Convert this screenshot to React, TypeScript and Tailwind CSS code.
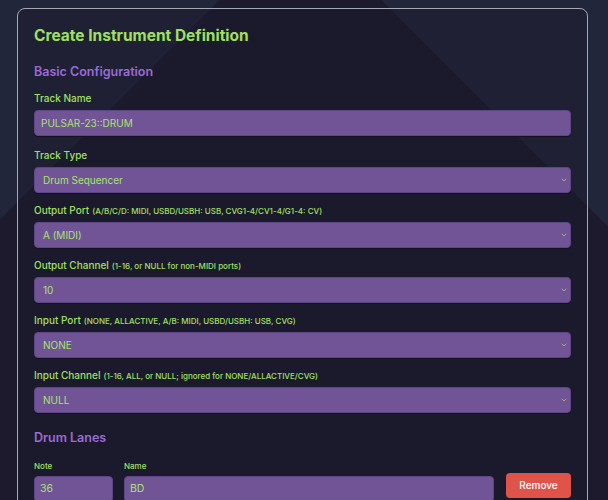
import { ChevronDown } from 'lucide-react';

const fields = [
  { label: 'Output Port', hint: '(A/B/C/D: MIDI, USBD/USBH: USB, CVG1-4/CV1-4/G1-4: CV)', value: 'A (MIDI)' },
  { label: 'Output Channel', hint: '(1-16, or NULL for non-MIDI ports)', value: '10' },
  { label: 'Input Port', hint: '(NONE, ALLACTIVE, A/B: MIDI, USBD/USBH: USB, CVG)', value: 'NONE' },
  { label: 'Input Channel', hint: '(1-16, ALL, or NULL; ignored for NONE/ALLACTIVE/CVG)', value: 'NULL' },
];

function Label({ text, hint }: { text: string; hint?: string }) {
  return (
    <div className="h-[12px] mb-[6px] text-[10px] leading-[12px] font-medium text-[#a0e060]">
      {text}
      {hint && <span className="ml-[3px] text-[8px]">{hint}</span>}
    </div>
  );
}

function Select({ value }: { value: string }) {
  return (
    <div className="relative">
      <div className="h-[26px] flex items-center pl-[8px] rounded-[4px] bg-[#715496] border border-[#5e4585] shadow-[0_1px_0_#14121f] text-[10px] text-[#a6e46c]">
        {value}
      </div>
      <ChevronDown className="absolute right-[3px] top-[9px] w-[8px] h-[8px] text-[#9cb56c]" strokeWidth={3} />
    </div>
  );
}

export default function App() {
  return (
    <div
      className="h-screen overflow-hidden pt-[8px] pl-[17px] bg-[#1c1a2c] bg-[linear-gradient(45deg,transparent_623px,#22263a_623px),linear-gradient(315deg,transparent_628px,#22263a_628px)]"
      style={{ fontFamily: 'Inter, "Noto Sans", sans-serif' }}
    >
      <div className="w-[571px] rounded-[8px] border-[1.5px] border-[#a4a8b6] bg-[#1c1a2e]/40 px-[16px] pt-[17px] pb-[20px]">
        <h1 className="text-[15.5px] leading-[20px] font-bold text-[#a0e060]">Create Instrument Definition</h1>

        {/* Basic config */}
        <h2 className="mt-[18px] text-[12.5px] leading-[16px] font-semibold text-[#9b6bd8]">Basic Configuration</h2>

        <div className="mt-[12px]">
          <Label text="Track Name" />
          <div className="h-[26px] flex items-center pl-[6px] rounded-[4px] bg-[#715496] border border-[#5e4585] shadow-[0_1px_0_#14121f] text-[10px] text-[#a6e46c]">
            PULSAR-23::DRUM
          </div>
        </div>

        <div className="mt-[13px]">
          <Label text="Track Type" />
          <Select value="Drum Sequencer" />
        </div>

        {fields.map((f) => (
          <div key={f.label} className="mt-[11px]">
            <Label text={f.label} hint={f.hint} />
            <Select value={f.value} />
          </div>
        ))}

        {/* Drum lanes */}
        <h2 className="mt-[17px] text-[12.5px] leading-[16px] font-semibold text-[#9b6bd8]">Drum Lanes</h2>

        <div className="mt-[15px] flex items-end gap-[11px]">
          <div className="w-[79px]">
            <div className="h-[10px] mb-[5px] text-[8px] leading-[10px] font-medium text-[#a0e060]">Note</div>
            <div className="h-[26px] flex items-center pl-[5px] rounded-[4px] bg-[#715496] border border-[#5e4585] text-[10.5px] text-[#a6e46c]">36</div>
          </div>
          <div className="flex-1">
            <div className="h-[10px] mb-[5px] text-[8px] leading-[10px] font-medium text-[#a0e060]">Name</div>
            <div className="h-[26px] flex items-center pl-[5px] rounded-[4px] bg-[#715496] border border-[#5e4585] text-[10.5px] text-[#a6e46c]">BD</div>
          </div>
          <button className="ml-[1px] mb-[4px] w-[65px] h-[25px] rounded-[4px] bg-[#e0534b] text-[10px] font-medium text-white">
            Remove
          </button>
        </div>
      </div>
    </div>
  );
}
